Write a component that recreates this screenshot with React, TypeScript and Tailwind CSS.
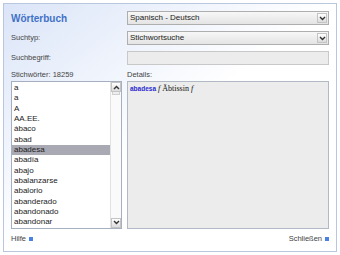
import React from 'react';

const words = [
  'a',
  'a',
  'A',
  'AA.EE.',
  'ábaco',
  'abad',
  'abadesa',
  'abadía',
  'abajo',
  'abalanzarse',
  'abalorio',
  'abanderado',
  'abandonado',
  'abandonar',
];

const Chevron: React.FC<{ up?: boolean }> = ({ up }) => (
  <svg width="7" height="5" viewBox="0 0 7 5" className={up ? 'rotate-180' : ''}>
    <path d="M1 1 L3.5 3.5 L6 1" fill="none" stroke="#333" strokeWidth="1.4" />
  </svg>
);

const Select: React.FC<{ value: string }> = ({ value }) => (
  <div className="flex h-[14px] items-center border border-[#aeaeae] bg-gradient-to-b from-[#f7f7f7] to-[#e4e4e4] pl-[2px] pr-[1px]">
    <span className="flex-1 truncate text-[8px] leading-none text-[#222]">{value}</span>
    <span className="flex h-[10px] w-[10px] items-center justify-center border border-[#c4c4c4] bg-gradient-to-b from-white to-[#dcdcdc]">
      <Chevron />
    </span>
  </div>
);

export default function App() {
  return (
    <div className="h-[255px] w-[340px] bg-white p-[3px] font-['Liberation_Sans',Arial,sans-serif]">
      <div className="flex h-full flex-col border border-[#b8c7de] bg-gradient-to-br from-[#dbe5f8] via-white to-white pl-[7px] pr-[6px] pt-[7px]">
        <div className="grid grid-cols-[111px_202px] gap-x-[5px] gap-y-[6px]">
          <div className="flex h-[14px] items-center text-[10px] font-bold text-[#3f71c8]">Wörterbuch</div>
          <Select value="Spanisch - Deutsch" />
          <div className="flex h-[14px] items-center text-[7.5px] text-[#444]">Suchtyp:</div>
          <Select value="Stichwortsuche" />
          <div className="flex h-[14px] items-center text-[7.5px] text-[#444]">Suchbegriff:</div>
          <div className="h-[14px] border border-[#c8c8c8] bg-[#ececec]" />
        </div>
        <div className="mt-[4px] grid grid-cols-[111px_202px] gap-x-[5px]">
          <div className="flex h-[12px] items-center text-[7.5px] text-[#444]">Stichwörter: 18259</div>
          <div className="flex h-[12px] items-center text-[7.5px] text-[#444]">Details:</div>
        </div>
        <div className="grid h-[146px] grid-cols-[111px_202px] gap-x-[5px]">
          <div className="flex border border-[#a6afbf] bg-white">
            <div className="flex-1 overflow-hidden pt-[1px]">
              {words.map((w, i) => (
                <div
                  key={i}
                  className={`h-[10.35px] pl-[2px] text-[8px] leading-[10.35px] text-[#222] ${
                    w === 'abadesa' ? 'bg-[#a9a9b4]' : ''
                  }`}
                >
                  {w}
                </div>
              ))}
            </div>
            <div className="flex w-[11px] flex-col border-l border-[#e2e2e2] bg-[#fafafa]">
              <div className="flex h-[10px] items-center justify-center border border-[#c4c4c4] bg-gradient-to-b from-white to-[#dcdcdc]">
                <Chevron up />
              </div>
              <div className="mx-[1px] h-[3px] border border-t-0 border-[#d0d0d0] bg-[#eeeeee]" />
              <div className="flex-1" />
              <div className="flex h-[10px] items-center justify-center border border-[#c4c4c4] bg-gradient-to-b from-white to-[#dcdcdc]">
                <Chevron />
              </div>
            </div>
          </div>
          <div className="border border-[#b2b9c6] bg-[#ececec] px-[2px] pt-[3px] text-[8px] leading-none">
            <span className="text-[6.5px] font-bold text-[#2a2ad0]">abadesa</span>
            <span className="font-['Liberation_Serif',serif] italic text-[#111]"> f </span>
            <span className="font-['Liberation_Serif',serif] text-[#111]">Äbtissin</span>
            <span className="font-['Liberation_Serif',serif] italic text-[#111]"> f</span>
          </div>
        </div>
        <div className="flex flex-1 items-center justify-between pb-[1px] pr-[1px] text-[7.5px] text-[#444]">
          <span className="flex items-center gap-[3px]">
            Hilfe <span className="inline-block h-[4px] w-[4px] bg-[#4a82e4]" />
          </span>
          <span className="flex items-center gap-[3px]">
            Schließen <span className="inline-block h-[4px] w-[4px] bg-[#4a82e4]" />
          </span>
        </div>
      </div>
    </div>
  );
}
